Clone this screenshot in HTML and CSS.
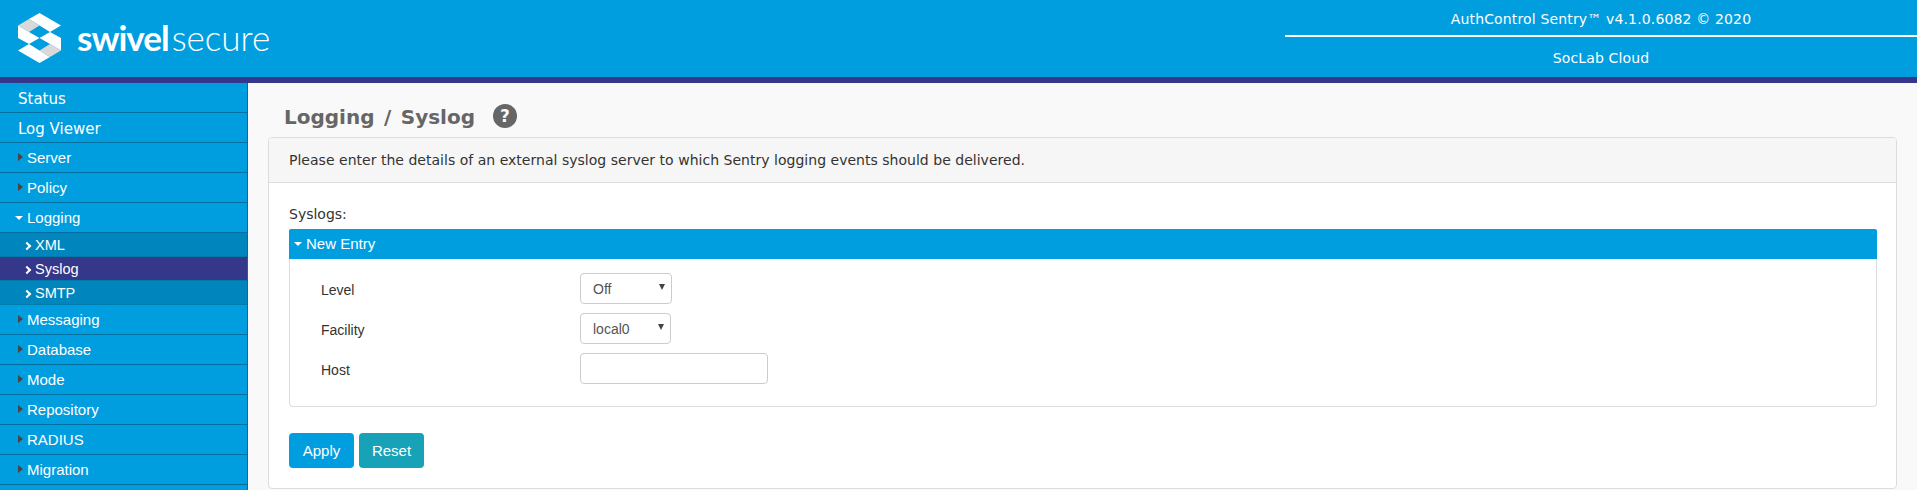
FILE: index.html
```html
<!DOCTYPE html>
<html lang="en">
<head>
<meta charset="utf-8">
<title>Logging / Syslog</title>
<link rel="stylesheet" href="styles.css">
</head>
<body>
<header class="top">
  <div class="brand">
    <svg class="mark" width="43" height="50" viewBox="18 13 43 50" aria-hidden="true">
      <polygon fill="#fff" points="39.5,13 61,25.5 50,32 39.5,25.5 29,19"/>
      <polygon fill="#d9d9d9" points="18,25.5 29,19 39.5,25.5 29,32"/>
      <polygon fill="#fff" points="18,25.5 29,32 39.5,38 29,44 18,38"/>
      <polygon fill="#fff" points="61,50.5 50,44 39.5,38 50,32 61,38"/>
      <polygon fill="#fff" points="39.5,63 18,50.5 29,44 39.5,50.5 50,57"/>
      <polygon fill="#d9d9d9" points="61,50.5 50,57 39.5,50.5 50,44"/>
    </svg>
    <span class="word"><b>swivel</b><span class="light">secure</span></span>
  </div>
  <div class="info">
    <div class="info-line">AuthControl Sentry™ v4.1.0.6082 © 2020</div>
    <div class="info-line second">SocLab Cloud</div>
  </div>
</header>
<div class="stripe"></div>
<div class="layout">
  <nav class="side">
    <a class="item plain">Status</a>
    <a class="item plain">Log Viewer</a>
    <a class="item closed">Server</a>
    <a class="item closed">Policy</a>
    <a class="item open">Logging</a>
    <a class="sub">XML</a>
    <a class="sub active">Syslog</a>
    <a class="sub">SMTP</a>
    <a class="item closed">Messaging</a>
    <a class="item closed">Database</a>
    <a class="item closed">Mode</a>
    <a class="item closed">Repository</a>
    <a class="item closed">RADIUS</a>
    <a class="item closed">Migration</a>
    <a class="item closed"></a>
  </nav>
  <main class="main">
    <div class="title-row">
      <h1 class="title">Logging / Syslog</h1>
      <span class="help">?</span>
    </div>
    <section class="panel">
      <div class="panel-head">Please enter the details of an external syslog server to which Sentry logging events should be delivered.</div>
      <div class="panel-body">
        <div class="caption">Syslogs:</div>
        <div class="bar"><i class="down"></i>New Entry</div>
        <div class="box">
          <div class="row">
            <label class="lbl">Level</label>
            <span class="pick w90"><select class="ctl"><option>Off</option></select></span>
          </div>
          <div class="row">
            <label class="lbl">Facility</label>
            <span class="pick w89"><select class="ctl"><option>local0</option></select></span>
          </div>
          <div class="row">
            <label class="lbl">Host</label>
            <input class="ctl host" type="text">
          </div>
        </div>
        <div class="actions">
          <button class="btn apply">Apply</button>
          <button class="btn reset">Reset</button>
        </div>
      </div>
    </section>
  </main>
</div>
</body>
</html>
```
FILE: styles.css
```css
* { box-sizing: border-box; }
html, body { margin: 0; height: 490px; overflow: hidden; }
body { font-family: "DejaVu Sans", sans-serif; background: #f9f9f9; color: #333; }

.top { height: 77px; background: #009ddf; display: flex; justify-content: space-between; color: #fff; }
.brand { display: flex; align-items: flex-start; padding: 13px 0 0 18px; }
.mark { display: block; }
.word { font-family: Lato, sans-serif; font-size: 35px; line-height: 44px; margin: 2px 0 0 16px; }
.word b { font-weight: 700; letter-spacing: -1px; margin-right: 3px; }
.light { font-weight: 300; }
.info { width: 632px; font-size: 14px; letter-spacing: 0.15px; text-align: center; }
.info-line { height: 37px; line-height: 38px; border-bottom: 2px solid #fff; }
.info-line.second { height: 40px; line-height: 42px; border-bottom: 0; }
.stripe { height: 6px; background: #35378a; }

.layout { display: flex; height: 407px; }
.side { width: 248px; flex: none; background: #009ddf; border-right: 1px solid #006f9f; overflow: hidden; }
.side a { display: block; color: #fff; position: relative; }
.item { height: 30px; line-height: 29px; border-bottom: 1px solid #006f9f; font-family: "Liberation Sans", sans-serif; font-size: 15px; padding-left: 27px; }
.item.plain { font-family: "DejaVu Sans", sans-serif; font-size: 15px; line-height: 33px; padding-left: 18px; }
.closed::before { content: ""; position: absolute; left: 18px; top: 10px; border-left: 5px solid #444; border-top: 4.5px solid transparent; border-bottom: 4.5px solid transparent; }
.open::before { content: ""; position: absolute; left: 15px; top: 13px; border-top: 4px solid #fff; border-left: 4px solid transparent; border-right: 4px solid transparent; }
.sub { height: 24px; line-height: 24px; background: #0086bd; font-family: "Liberation Sans", sans-serif; font-size: 14.5px; padding-left: 35px; border-bottom: 1px solid #0079ab; }
.sub.active { background: #35378a; border-bottom-color: #0079ab; }
.sub::before { content: ""; position: absolute; left: 24px; top: 10px; width: 4px; height: 4px; border-top: 2px solid #fff; border-right: 2px solid #fff; transform: rotate(45deg); }

.main { flex: 1; padding: 0 20px 0 20px; min-width: 0; }
.title-row { height: 54px; padding: 21px 0 0 16px; display: flex; align-items: flex-start; }
.title { margin: 0; font-size: 20px; font-weight: 700; line-height: 26px; color: #666; word-spacing: 2.5px; }
.help { width: 24px; height: 24px; margin-left: 18px; border-radius: 50%; background: #666; color: #f9f9f9; font-family: "DejaVu Sans", sans-serif; font-weight: 700; font-size: 17px; line-height: 24px; text-align: center; }

.panel { background: #fff; border: 1px solid #ddd; border-radius: 4px; height: 352px; }
.panel-head { height: 45px; line-height: 44px; padding-left: 20px; background: #f6f6f6; border-bottom: 1px solid #ddd; font-size: 14px; letter-spacing: 0.02px; color: #333; border-radius: 3px 3px 0 0; }
.panel-body { padding: 18px 19px 0 20px; }
.caption { font-size: 14px; line-height: 26px; height: 28px; }
.bar { height: 30px; line-height: 30px; background: #009ddf; color: #fff; font-family: "Liberation Sans", sans-serif; font-size: 15px; padding-left: 17px; position: relative; border-radius: 2px 2px 0 0; }
.down { position: absolute; left: 5px; top: 13px; border-top: 4px solid #fff; border-left: 4px solid transparent; border-right: 4px solid transparent; }
.box { height: 148px; border: 1px solid #ddd; border-top: 0; border-radius: 0 0 4px 4px; padding: 14px 0 0 31px; }
.row { display: flex; align-items: center; height: 31px; margin-bottom: 9px; }
.lbl { width: 259px; flex: none; font-family: "Liberation Sans", sans-serif; font-size: 14px; line-height: 18px; padding-top: 2px; color: #333; }
.ctl { display: block; height: 31px; border: 1px solid #ccc; border-radius: 4px; background: #fff; font-family: "Liberation Sans", sans-serif; font-size: 14px; color: #555; }
.pick { display: block; position: relative; }
.pick select { width: 100%; appearance: none; padding: 0 12px; }
.pick::after { content: ""; position: absolute; right: 7px; top: 11px; border-top: 6px solid #444; border-left: 3.5px solid transparent; border-right: 3.5px solid transparent; pointer-events: none; }
.w90 { width: 92px; }
.w89 { width: 91px; }
.host { width: 188px; }

.actions { display: flex; gap: 5px; margin-top: 26px; }
.btn { width: 65px; height: 35px; border: 0; border-radius: 4px; color: #fff; font-family: "Liberation Sans", sans-serif; font-size: 15px; padding: 0; }
.apply { background: #009ddf; }
.reset { background: #17a2b8; }
```
